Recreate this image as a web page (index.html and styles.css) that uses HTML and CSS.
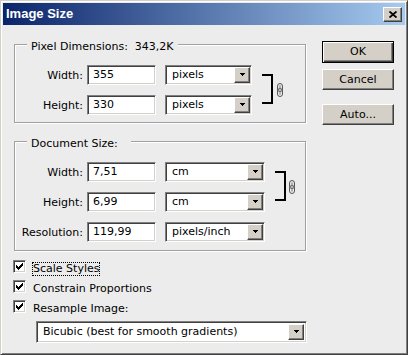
FILE: index.html
```html
<!DOCTYPE html>
<html>
<head>
<meta charset="utf-8">
<link rel="stylesheet" href="styles.css">
</head>
<body>
<div class="window">
  <div class="titlebar">
    <span class="title">Image Size</span>
    <span class="close"><svg width="8" height="7" viewBox="0 0 8 7"><path d="M0.5 0.5L7.5 6.5M7.5 0.5L0.5 6.5" stroke="#000" stroke-width="1.8"/></svg></span>
  </div>
  <div class="body">
    <div class="main">
      <div class="group g1">
        <div class="legend l1">Pixel Dimensions: &nbsp;343,2K</div>
        <div class="linked">
          <div class="rows">
            <div class="row">
              <span class="lbl">Width:</span>
              <div class="input">355</div>
              <div class="select s1"><span class="val">pixels</span><span class="drop"><svg width="5" height="3" viewBox="0 0 5 3"><rect x="0" y="0" width="5" height="1"/><rect x="1" y="1" width="3" height="1"/><rect x="2" y="2" width="1" height="1"/></svg></span></div>
            </div>
            <div class="row">
              <span class="lbl">Height:</span>
              <div class="input">330</div>
              <div class="select s1"><span class="val">pixels</span><span class="drop"><svg width="5" height="3" viewBox="0 0 5 3"><rect x="0" y="0" width="5" height="1"/><rect x="1" y="1" width="3" height="1"/><rect x="2" y="2" width="1" height="1"/></svg></span></div>
            </div>
          </div>
          <div class="bracket"></div>
          <svg class="chain" width="6" height="14" viewBox="0 0 6 14"><rect x="0.5" y="0.5" width="5" height="8" rx="2.5" fill="#e6e6e6" stroke="#555"/><rect x="0.5" y="5.5" width="5" height="8" rx="2.5" fill="none" stroke="#555"/><path d="M3 2.5V6.5M3 7.5V11.5" stroke="#777"/></svg>
        </div>
      </div>

      <div class="group g2">
        <div class="legend l2">Document Size:</div>
        <div class="linked l2link">
          <div class="rows">
            <div class="row">
              <span class="lbl">Width:</span>
              <div class="input">7,51</div>
              <div class="select s2"><span class="val">cm</span><span class="drop"><svg width="5" height="3" viewBox="0 0 5 3"><rect x="0" y="0" width="5" height="1"/><rect x="1" y="1" width="3" height="1"/><rect x="2" y="2" width="1" height="1"/></svg></span></div>
            </div>
            <div class="row">
              <span class="lbl">Height:</span>
              <div class="input">6,99</div>
              <div class="select s2"><span class="val">cm</span><span class="drop"><svg width="5" height="3" viewBox="0 0 5 3"><rect x="0" y="0" width="5" height="1"/><rect x="1" y="1" width="3" height="1"/><rect x="2" y="2" width="1" height="1"/></svg></span></div>
            </div>
          </div>
          <div class="bracket"></div>
          <svg class="chain c2" width="6" height="14" viewBox="0 0 6 14"><rect x="0.5" y="0.5" width="5" height="8" rx="2.5" fill="#e6e6e6" stroke="#555"/><rect x="0.5" y="5.5" width="5" height="8" rx="2.5" fill="none" stroke="#555"/><path d="M3 2.5V6.5M3 7.5V11.5" stroke="#777"/></svg>
        </div>
        <div class="row res">
          <span class="lbl">Resolution:</span>
          <div class="input">119,99</div>
          <div class="select s2"><span class="val">pixels/inch</span><span class="drop"><svg width="5" height="3" viewBox="0 0 5 3"><rect x="0" y="0" width="5" height="1"/><rect x="1" y="1" width="3" height="1"/><rect x="2" y="2" width="1" height="1"/></svg></span></div>
        </div>
      </div>

      <div class="checks">
        <div class="check">
          <span class="box"><svg width="7" height="7" viewBox="0 0 7 7"><path d="M0 2h1v1h1v1h1V3h1V2h1V1h1V0h1v3H6v1H5v1H4v1H3v1H2V6H1V5H0z"/></svg></span>
          <span class="ctext focus">Scale Styles</span>
        </div>
        <div class="check">
          <span class="box"><svg width="7" height="7" viewBox="0 0 7 7"><path d="M0 2h1v1h1v1h1V3h1V2h1V1h1V0h1v3H6v1H5v1H4v1H3v1H2V6H1V5H0z"/></svg></span>
          <span class="ctext">Constrain Proportions</span>
        </div>
        <div class="check">
          <span class="box"><svg width="7" height="7" viewBox="0 0 7 7"><path d="M0 2h1v1h1v1h1V3h1V2h1V1h1V0h1v3H6v1H5v1H4v1H3v1H2V6H1V5H0z"/></svg></span>
          <span class="ctext">Resample Image:</span>
        </div>
        <div class="select s3"><span class="val">Bicubic (best for smooth gradients)</span><span class="drop"><svg width="5" height="3" viewBox="0 0 5 3"><rect x="0" y="0" width="5" height="1"/><rect x="1" y="1" width="3" height="1"/><rect x="2" y="2" width="1" height="1"/></svg></span></div>
      </div>
    </div>

    <div class="buttons">
      <div class="btn ok">OK</div>
      <div class="btn cancel">Cancel</div>
      <div class="btn auto">Auto...</div>
    </div>
  </div>
</div>
</body>
</html>
```

FILE: styles.css
```css
* { box-sizing: border-box; }
html, body { margin: 0; padding: 0; }
body {
  width: 408px;
  height: 355px;
  font-family: "DejaVu Sans", sans-serif;
  font-size: 11px;
  color: #000;
  background: #ececec;
}
.window {
  width: 408px;
  height: 355px;
  background: #ececec;
  border: 1px solid;
  border-color: #d4d0c8 #404040 #404040 #d4d0c8;
  box-shadow: inset 1px 1px 0 #fff, inset -1px -1px 0 #808080;
  padding: 2px;
  display: flex;
  flex-direction: column;
}
.titlebar {
  height: 22px;
  flex: none;
  background: linear-gradient(to right, #0a246a, #a6caf0);
  display: flex;
  align-items: center;
  justify-content: space-between;
  padding: 0 3px 0 3px;
}
.title {
  font-family: "Liberation Sans", sans-serif;
  font-weight: bold;
  font-size: 13px;
  color: #fff;
  line-height: 22px;
}
.close {
  width: 19px;
  height: 15px;
  background: #d4d0c8;
  border: 1px solid;
  border-color: #fff #404040 #404040 #fff;
  box-shadow: inset -1px -1px 0 #808080;
  display: flex;
  align-items: center;
  justify-content: center;
  margin-top: 1px;
}
.body {
  flex: 1;
  display: flex;
  padding: 16px 0 0 11px;
}
.main {
  width: 292px;
  flex: none;
}
.group {
  position: relative;
  border: 1px solid #a0a0a0;
  box-shadow: inset 1px 1px 0 #fff, 1px 1px 0 #fff;
  padding: 20px 0 7px 0;
}
.g1 { margin-top: 3px; }
.g2 { margin-top: 18px; padding-bottom: 8px; }
.legend {
  position: absolute;
  top: -5px;
  left: 12px;
  line-height: 13px;
  background: #ececec;
  padding: 0 4px 0 4px;
  white-space: nowrap;
}
.l2 { padding-right: 13px; }
.linked {
  display: flex;
  align-items: flex-start;
}
.rows {
  display: flex;
  flex-direction: column;
  gap: 10px;
}
.row {
  display: flex;
  align-items: center;
  height: 20px;
}
.res { margin-top: 10px; }
.lbl {
  width: 68px;
  text-align: right;
  margin-right: 4px;
  line-height: 20px;
  height: 20px;
  padding-top: 1px;
  white-space: nowrap;
}
.input, .select, .box {
  background: #fff;
  border: 1px solid;
  border-color: #808080 #fff #fff #808080;
  box-shadow: inset 1px 1px 0 #404040, inset -1px -1px 0 #d4d0c8;
}
.input {
  width: 69px;
  height: 20px;
  line-height: 18px;
  padding-left: 5px;
}
.select {
  height: 20px;
  margin-left: 9px;
  display: flex;
  align-items: center;
  justify-content: space-between;
  padding: 1px 1px 1px 6px;
  white-space: nowrap;
}
.s1 { width: 87px; }
.s2 { width: 100px; }
.val { line-height: 16px; }
.drop {
  width: 16px;
  height: 16px;
  flex: none;
  background: #d4d0c8;
  border: 1px solid;
  border-color: #fff #404040 #404040 #fff;
  box-shadow: inset -1px -1px 0 #808080;
  display: flex;
  align-items: center;
  justify-content: center;
  padding-bottom: 1px;
}
.bracket {
  width: 11px;
  height: 30px;
  margin-left: 10px;
  margin-top: 9px;
  border: 2px solid #000;
  border-left: none;
  flex: none;
}
.chain {
  margin-left: 4px;
  align-self: center;
  flex: none;
}
.chain.c2 { margin-left: 3px; }
.checks {
  margin-top: 9px;
  display: flex;
  flex-direction: column;
}
.check {
  height: 20px;
  display: flex;
  align-items: flex-start;
  margin-left: -1px;
}
.box {
  width: 13px;
  height: 13px;
  flex: none;
  display: flex;
  align-items: center;
  justify-content: center;
}
.ctext {
  margin-left: 6px;
  margin-top: 2px;
  height: 14px;
  line-height: 12px;
  border: 1px dotted transparent;
  white-space: nowrap;
}
.ctext.focus { border-color: #000; }
.s3 {
  width: 271px;
  height: 22px;
  margin-left: 22px;
  margin-top: 1px;
  padding: 2px 2px 2px 6px;
}
.s3 .drop { height: 16px; }
.buttons {
  margin-left: 16px;
  width: 72px;
  display: flex;
  flex-direction: column;
}
.btn {
  width: 72px;
  height: 21px;
  background: #d4d0c8;
  border: 1px solid;
  border-color: #fff #404040 #404040 #fff;
  box-shadow: inset -1px -1px 0 #808080;
  text-align: center;
  line-height: 19px;
}
.btn.ok {
  height: 22px;
  border: 1px solid #000;
  box-shadow: inset 1px 1px 0 #fff, inset -1px -1px 0 #404040, inset -2px -2px 0 #808080;
  line-height: 20px;
}
.btn.cancel { margin-top: 6px; }
.btn.auto { margin-top: 14px; }
```
